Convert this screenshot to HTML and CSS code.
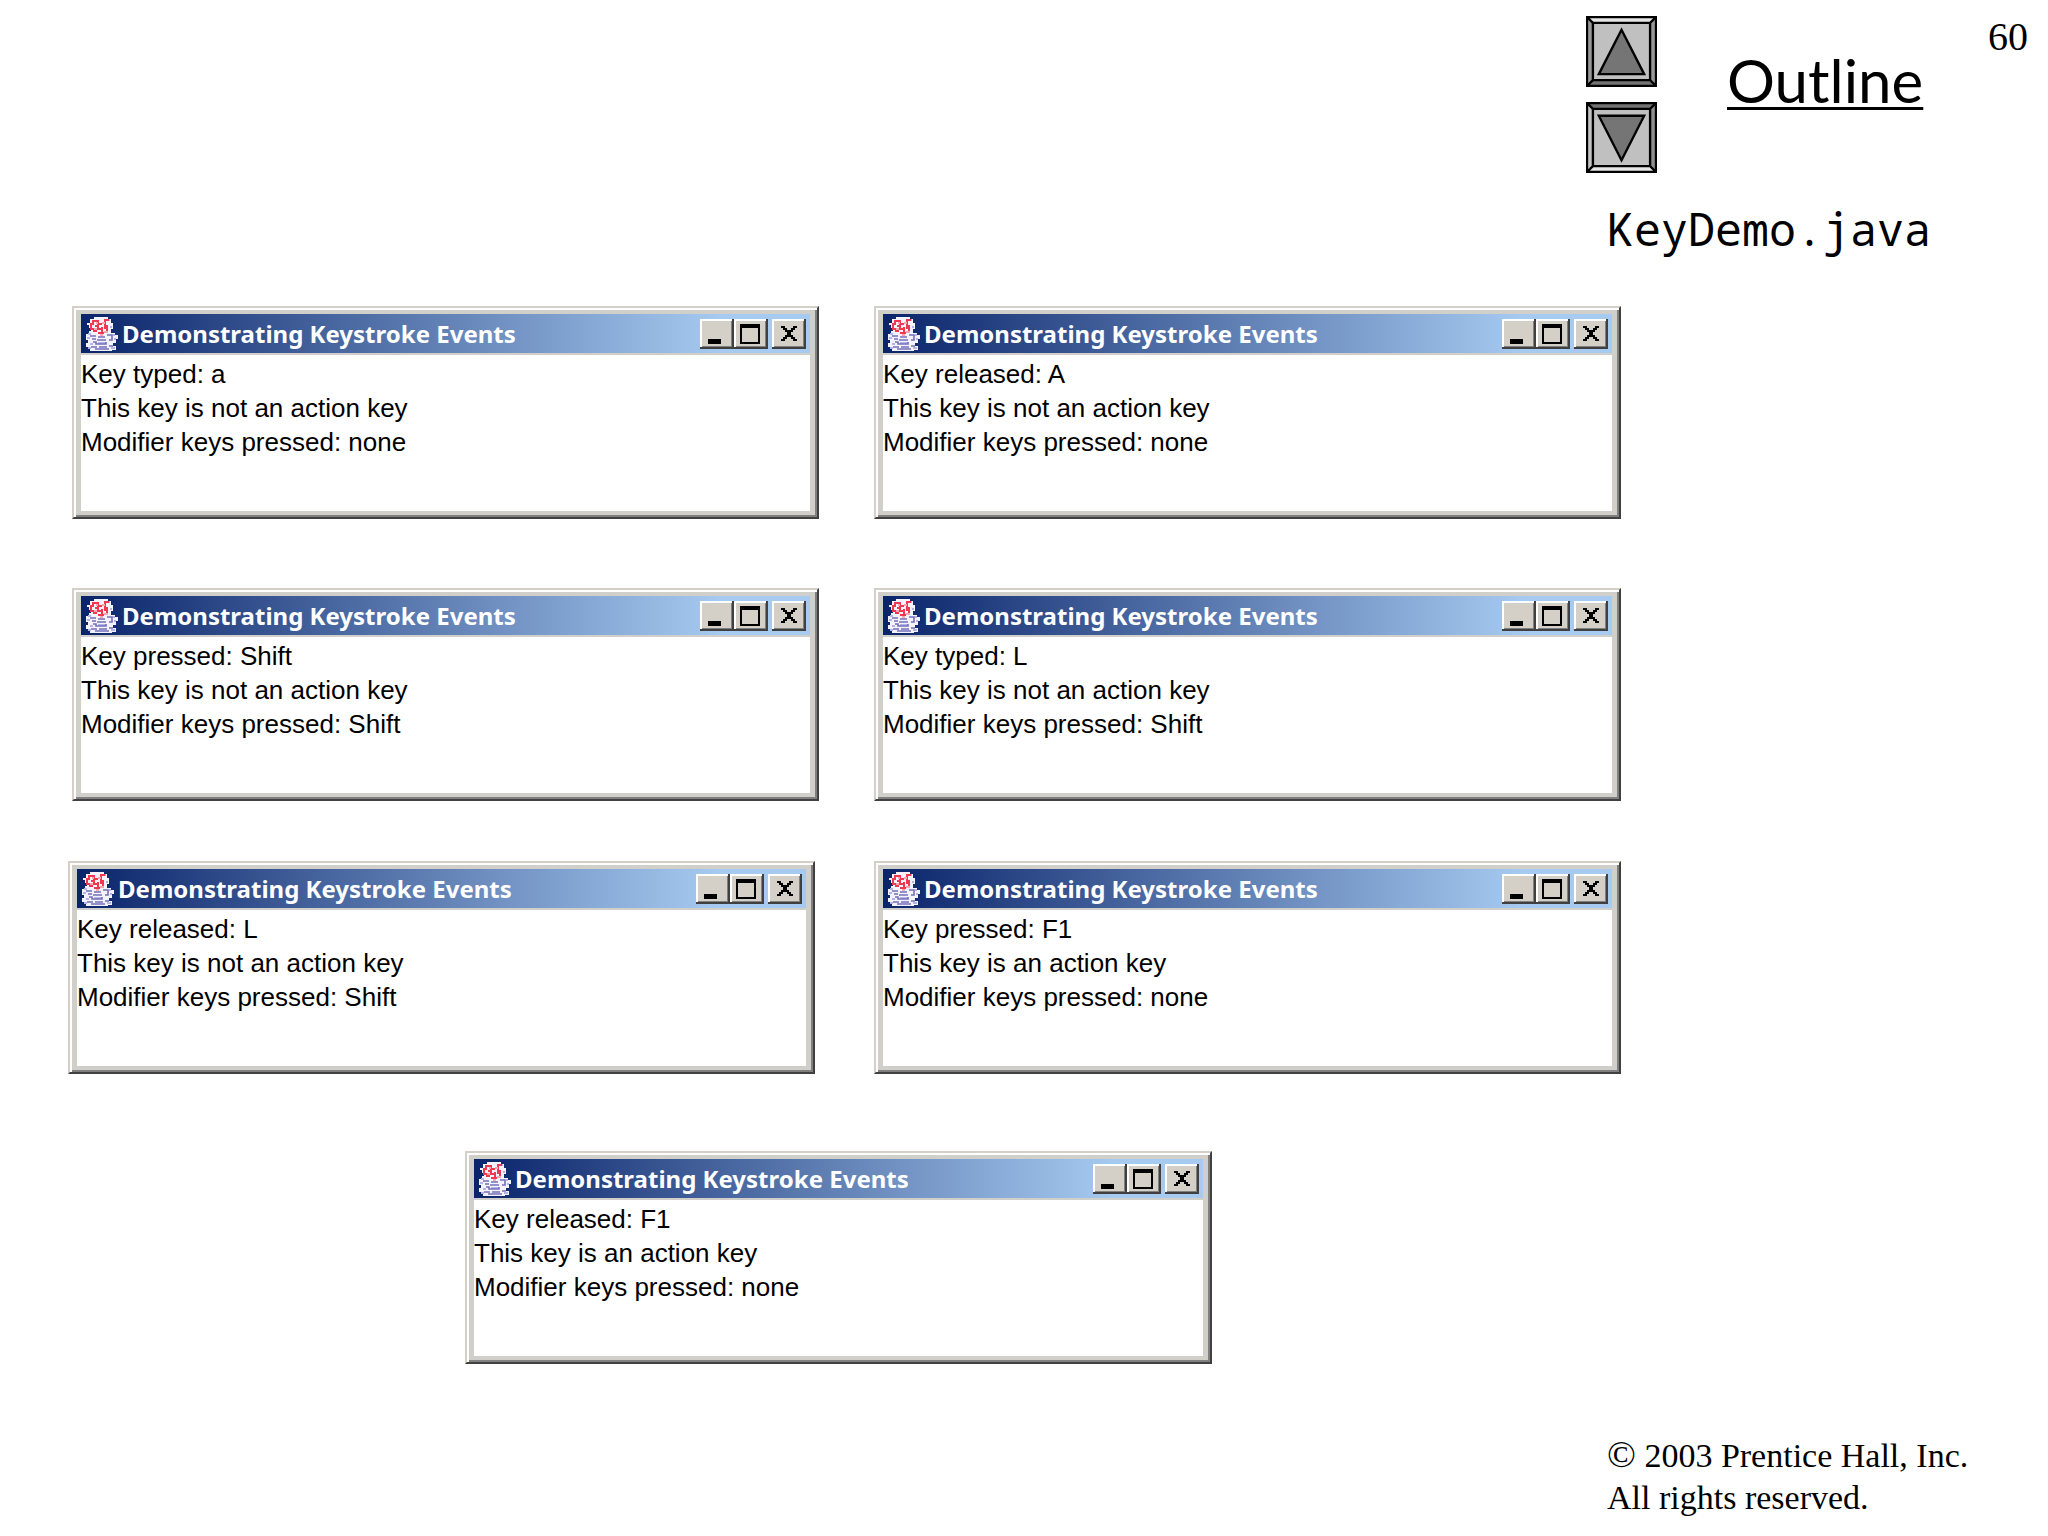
FILE: index.html
```html
<!DOCTYPE html>
<html lang="en">
<head>
  <meta charset="UTF-8">
  <title>KeyDemo.java</title>
  <link rel="stylesheet" href="styles.css">
</head>
<body>

  <svg class="sprites" aria-hidden="true">
    <symbol id="java" viewBox="0 0 32 34">
      <path d="M4 2h4V0h14v2h3v4h2v6h-2v4h4v2h3v4h-2v4h-3v3h3v4h-4v2H4v-3H2v-2H0v-4h2v-3H0v-6h3v-3h2v-3H3v-3H1V6h3z" fill="#f4f2ff"/>
      <path d="M2 17h3M1 21h3M4 27h3M27 18h2M28 22h2M2 31h3M25 31h4M4 8h2M22 3h2M24 10h2M12 26h8" stroke="#b4b4ea" stroke-width="2"/>
      <path d="M4 7h3V4h4M5 7v5h5M7 14h4M12 3v9h4M12 7h4M18 3h5M19 3v9M16 10v6M21 8v6M12 16h6M9 9h3" fill="none" stroke="#f0394f" stroke-width="2"/>
      <path d="M10 6h2M16 6h3M8 12h3M18 15h4M14 18h3" stroke="#f7a5b0" stroke-width="2"/>
      <path d="M4 19h6M12 20h7M21 18h5v5h-3M6 22h4M11 23h9M7 25h3v2h10v-2M5 30h6M13 30h8M23 29h4M9 32h14" fill="none" stroke="#7470b8" stroke-width="1.6"/>
    </symbol>
    <symbol id="min" viewBox="0 0 34 30"><path d="M8 20h13v5H8z"/></symbol>
    <symbol id="max" viewBox="0 0 34 30"><path fill-rule="evenodd" d="M6 5h20v20H6zM8 9v14h16V9z"/></symbol>
    <symbol id="close" viewBox="0 0 34 30"><path d="M9 7h4v2h2v2h4V9h2V7h4v2h-2v2h-2v2h-2v3h2v2h2v2h2v2h-4v-2h-2v-2h-4v2h-2v2H9v-2h2v-2h2v-2h2v-3h-2v-2h-2V9H9z"/></symbol>
  </svg>

  <header>
    <div class="outline">
      <nav class="arrows">
        <button type="button" aria-label="Previous slide">
          <svg viewBox="0 0 72 72">
            <path d="M1 1h70l-6 6H7z" fill="#e6e6e6"/>
            <path d="M1 1l6 6v58l-6 6z" fill="#999"/>
            <path d="M71 1l-6 6v58l6 6z" fill="#999"/>
            <path d="M1 71l6-6h58l6 6z" fill="#737373"/>
            <path d="M7 7h58v58H7z" fill="#c0c0c0"/>
            <path d="M1 1h70v70H1zM7 7h58v58H7zM1 1l6 6M71 1l-6 6M1 71l6-6M71 71l-6-6" class="line"/>
            <path d="M36 14l23 45H13z" fill="#757575" class="tri"/>
          </svg>
        </button>
        <button type="button" aria-label="Next slide">
          <svg viewBox="0 0 72 72">
            <path d="M1 1h70l-6 6H7z" fill="#737373"/>
            <path d="M1 1l6 6v58l-6 6z" fill="#c4c4c4"/>
            <path d="M71 1l-6 6v58l6 6z" fill="#8f8f8f"/>
            <path d="M1 71l6-6h58l6 6z" fill="#e6e6e6"/>
            <path d="M7 7h58v58H7z" fill="#c0c0c0"/>
            <path d="M1 1h70v70H1zM7 7h58v58H7zM1 1l6 6M71 1l-6 6M1 71l6-6M71 71l-6-6" class="line"/>
            <path d="M36 59l23-45H13z" fill="#757575" class="tri"/>
          </svg>
        </button>
      </nav>
      <h1>Outline</h1>
      <span class="page">60</span>
    </div>
    <h2>KeyDemo.java</h2>
  </header>

  <main id="windows"></main>

  <footer>
    <p><span class="copy">©</span> 2003 Prentice Hall, Inc.</p>
    <p>All rights reserved.</p>
  </footer>

  <script>
    const rows = [
      [["Key typed: a", "This key is not an action key", "Modifier keys pressed: none"],
       ["Key released: A", "This key is not an action key", "Modifier keys pressed: none"]],
      [["Key pressed: Shift", "This key is not an action key", "Modifier keys pressed: Shift"],
       ["Key typed: L", "This key is not an action key", "Modifier keys pressed: Shift"]],
      [["Key released: L", "This key is not an action key", "Modifier keys pressed: Shift"],
       ["Key pressed: F1", "This key is an action key", "Modifier keys pressed: none"]],
      [["Key released: F1", "This key is an action key", "Modifier keys pressed: none"]]
    ];

    function windowHtml(lines) {
      return `
        <section class="window">
          <div class="titlebar">
            <svg class="java"><use href="#java"/></svg>
            <h3>Demonstrating Keystroke Events</h3>
            <button type="button" aria-label="Minimize"><svg><use href="#min"/></svg></button>
            <button type="button" aria-label="Maximize"><svg><use href="#max"/></svg></button>
            <button type="button" aria-label="Close" class="close"><svg><use href="#close"/></svg></button>
          </div>
          <div class="content">${lines.map(line => `<p>${line}</p>`).join("")}</div>
        </section>`;
    }

    document.getElementById("windows").innerHTML = rows
      .map((row, i) => `<div class="row row-${i + 1}">${row.map(windowHtml).join("")}</div>`)
      .join("");
  </script>
</body>
</html>
```
FILE: styles.css
```css
* {
  box-sizing: border-box;
}

body {
  margin: 0;
  min-height: 100vh;
  display: flex;
  flex-direction: column;
  background: #fff;
  color: #000;
  font-family: "Liberation Serif", serif;
}

h1, h2, h3, p {
  margin: 0;
  font-weight: normal;
}

button {
  padding: 0;
  border: 0;
  background: none;
  cursor: pointer;
}

svg {
  display: block;
}

.sprites {
  display: none;
}

header {
  width: 462px;
  margin-left: auto;
  padding-top: 16px;
}

.outline {
  display: flex;
  align-items: flex-start;
}

.arrows {
  display: flex;
  flex-direction: column;
  gap: 15px;
}

.arrows svg {
  width: 71px;
  height: 71px;
}

.line, .tri {
  stroke: #000;
  stroke-width: 2.4;
}

.line {
  fill: none;
}

h1 {
  margin: 30px 0 0 70px;
  font: 60px/68px Lato, sans-serif;
  text-decoration: underline;
  text-decoration-thickness: 3px;
  text-underline-offset: 4px;
  text-decoration-skip-ink: none;
}

.page {
  margin-left: auto;
  padding-right: 20px;
  font-size: 40px;
  line-height: 42px;
}

h2 {
  margin-top: 28px;
  padding-left: 21px;
  font: 45px/56px "Noto Sans Mono", "DejaVu Sans Mono", monospace;
}

main {
  padding: 49px 0 60px;
}

.row {
  display: flex;
  gap: 55px;
  padding-left: 72px;
}

.row-2 {
  margin-top: 69px;
}

.row-3 {
  margin-top: 60px;
  gap: 59px;
  padding-left: 68px;
}

.row-4 {
  margin-top: 77px;
  padding-left: 465px;
}

.window {
  width: 747px;
  padding: 6px 7px;
  border: 2px solid;
  border-color: #d4d0c8 #404040 #404040 #d4d0c8;
  background: #d0cfca;
  box-shadow: inset 2px 2px #fff, inset -2px -2px #808080;
}

.titlebar {
  display: flex;
  align-items: center;
  height: 39px;
  padding: 0 4px 0 5px;
  background: linear-gradient(to right, #0a246a, #a6caf0 88%);
}

.java {
  width: 32px;
  height: 34px;
}

h3 {
  flex: 1;
  padding-left: 4px;
  color: #fff;
  font: bold 24px/32px "Noto Sans", sans-serif;
}

.titlebar button {
  width: 34px;
  height: 30px;
  background: #d4d0c8;
  box-shadow: inset -2px -2px #404040, inset 2px 2px #fff, inset -3px -3px #808080;
}

.titlebar button svg {
  width: 34px;
  height: 30px;
}

.titlebar .close {
  margin-left: 4px;
}

.content {
  min-height: 156px;
  margin-top: 2px;
  padding-top: 2px;
  background: #fff;
  font: 26px/34px "Liberation Sans", sans-serif;
}

footer {
  width: 441px;
  margin-top: auto;
  margin-left: auto;
  padding-bottom: 17px;
  font-size: 34px;
  line-height: 42px;
}

.copy {
  font-size: 38px;
  line-height: 1;
}
```
